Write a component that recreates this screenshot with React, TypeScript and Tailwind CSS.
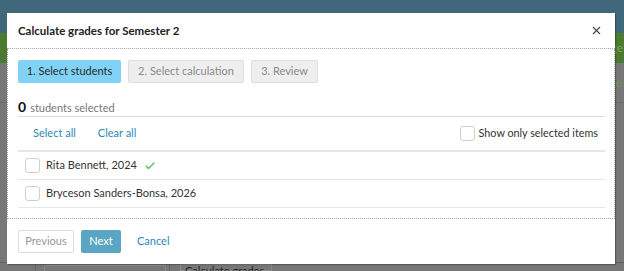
import { Check, X } from 'lucide-react';

const font = { fontFamily: 'Lato, "Open Sans", sans-serif' };

function Checkbox() {
    return <span className="block h-[15px] w-[15px] shrink-0 rounded-[3px] border border-[#cfcfcf] bg-white" />;
}

function StudentRow({ name, done }: { name: string; done?: boolean }) {
    return (
        <div className="flex h-[28px] items-center gap-[6px] border-b border-[#e6e6e6] pl-[7px] text-[11px] text-[#333]">
            <Checkbox />
            <span>{name}</span>
            {done && <Check className="ml-[1px] h-[12px] w-[12px] text-[#5cb85c]" strokeWidth={2.5} />}
        </div>
    );
}

export default function App() {
    return (
        <div className="relative flex h-[271px] w-[624px] flex-col overflow-hidden bg-[#777777]" style={font}>
            {/* dimmed page behind the dialog */}
            <div className="h-[33px] bg-[#41677a]" />
            <div className="flex h-[30px] items-center justify-end bg-[#4c7a30] pr-[1px] text-[12px] text-[#7aa35c]">ge</div>
            <div className="flex flex-1 flex-col">
                <div className="flex h-[40px] items-center justify-end border-b border-[#6a6a6a] pr-[2px] text-[12px] text-[#6c9a4c]">e</div>
                <div className="mt-auto flex h-[9px] border-t border-[#3f6a78]">
                    <div className="ml-[35px] w-[135px] border-l border-r border-[#666]">
                        <div className="ml-[8px] mt-[2px] h-full w-[122px] rounded-[2px] border border-[#8a8a8a]" />
                    </div>
                    <div className="ml-[10px] mt-[1px] w-[92px] border border-[#8a8a8a] pl-[4px] text-[11px] leading-[12px] text-[#222]">Calculate grades</div>
                </div>
            </div>

            {/* dialog */}
            <div className="absolute left-[7px] top-[13px] flex h-[251px] w-[608px] flex-col bg-white shadow-[1px_1px_1px_rgba(0,0,0,0.25)]">
                <div className="flex h-[36px] shrink-0 items-center justify-between border-b border-dotted border-[#a8a8a8] pl-[11px] pr-[12px]">
                    <h1 className="text-[11.5px] font-bold text-[#222]">Calculate grades for Semester 2</h1>
                    <X className="h-[13px] w-[13px] text-[#444]" strokeWidth={2} />
                </div>

                <div className="flex h-[170px] shrink-0 flex-col border-b border-r border-l border-dotted border-[#a8a8a8] pl-[10px] pr-[9px]">
                    <div className="mt-[11px] flex gap-[7px] text-[11px]">
                        <div className="flex h-[23px] w-[103px] items-center justify-center rounded-[2px] bg-[#80d3f7] text-[#2a2a2a]">
                            1. Select students
                        </div>
                        <div className="flex h-[23px] w-[116px] items-center justify-center rounded-[2px] border border-[#dedede] bg-[#eeeeee] text-[#8a8a8a]">
                            2. Select calculation
                        </div>
                        <div className="flex h-[23px] w-[67px] items-center justify-center rounded-[2px] border border-[#dedede] bg-[#eeeeee] text-[#8a8a8a]">
                            3. Review
                        </div>
                    </div>

                    <div className="mt-[14px] flex h-[20px] items-end border-b border-[#dcdcdc] pb-[1px]">
                        <span className="text-[14px] font-bold leading-[16px] text-[#111]">0</span>
                        <span className="ml-[4px] text-[11px] leading-[14px] text-[#777]">students selected</span>
                    </div>

                    <div className="flex h-[35px] items-center border-b-2 border-[#e6e6e6] text-[11px]">
                        <span className="ml-[15px] text-[#2a8ab8]">Select all</span>
                        <span className="ml-[22px] text-[#2a8ab8]">Clear all</span>
                        <label className="ml-auto mr-[7px] flex items-center gap-[4px] text-[#333]">
                            <Checkbox />
                            <span className="text-[10.8px]">Show only selected items</span>
                        </label>
                    </div>

                    <StudentRow name="Rita Bennett, 2024" done />
                    <StudentRow name="Bryceson Sanders-Bonsa, 2026" />
                </div>

                <div className="flex flex-1 items-start gap-[7px] pl-[11px] pt-[11px] text-[11px]">
                    <button className="h-[23px] w-[56px] rounded-[2px] border border-[#dcdcdc] bg-white text-[#999]">Previous</button>
                    <button className="h-[23px] w-[40px] rounded-[2px] bg-[#5aa5c3] text-white">Next</button>
                    <button className="ml-[9px] h-[23px] text-[#2a8ab8]">Cancel</button>
                </div>
            </div>
        </div>
    );
}
